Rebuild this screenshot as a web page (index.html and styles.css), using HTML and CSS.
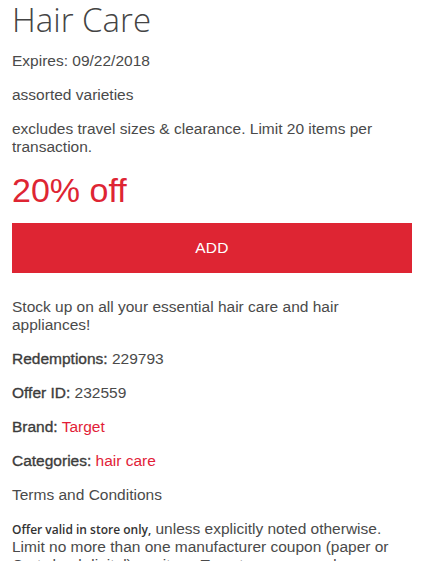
FILE: index.html
```html
<!DOCTYPE html>
<html>
<head>
<meta charset="utf-8">
<link rel="stylesheet" href="styles.css">
</head>
<body>
<div class="offer">
  <h1 class="title">Hair Care</h1>
  <p class="line">Expires: 09/22/2018</p>
  <p class="line">assorted varieties</p>
  <p class="line">excludes travel sizes &amp; clearance. Limit 20 items per transaction.</p>
  <div class="discount">20% off</div>
  <button class="add">ADD</button>
  <p class="line">Stock up on all your essential hair care and hair appliances!</p>
  <p class="line"><span class="label">Redemptions:</span> 229793</p>
  <p class="line"><span class="label">Offer ID:</span> 232559</p>
  <p class="line"><span class="label">Brand:</span> <a class="link">Target</a></p>
  <p class="line"><span class="label">Categories:</span> <a class="link">hair care</a></p>
  <p class="line">Terms and Conditions</p>
  <p class="line"><span class="fine">Offer valid in store only,</span> unless explicitly noted otherwise. Limit no more than one manufacturer coupon (paper or Cartwheel digital) per item. Target coupons and one Cartwheel offer may be combined.</p>
</div>
</body>
</html>
```

FILE: styles.css
```css
html, body {
  margin: 0;
  padding: 0;
  background: #fff;
}
body {
  font-family: "Liberation Sans", Arial, sans-serif;
  color: #4a4a4a;
}
.offer {
  padding: 0 11px 0 12px;
}
.title {
  margin: 0;
  padding-top: 1px;
  font-family: "Open Sans", "Liberation Sans", sans-serif;
  font-weight: 300;
  font-size: 33px;
  line-height: 38px;
  color: #444;
}
.line {
  margin: 16px 0 0;
  font-size: 15.5px;
  line-height: 18px;
}
.title + .line {
  margin-top: 13px;
}
.label {
  color: #3c3c3c;
  -webkit-text-stroke: 0.35px #3c3c3c;
}
.link {
  color: #e21d38;
  text-decoration: none;
}
.discount {
  margin-top: 14px;
  font-size: 34px;
  line-height: 40px;
  color: #de2533;
}
.add {
  display: block;
  width: 100%;
  height: 50px;
  margin-top: 13px;
  margin-bottom: 25px;
  border: none;
  background: #de2533;
  color: #fff;
  font-family: "Liberation Sans", Arial, sans-serif;
  font-size: 15.5px;
  letter-spacing: 0.3px;
}
.add + .line {
  margin-top: 0;
}
.fine {
  font-family: "Open Sans", sans-serif;
  font-weight: 600;
  font-size: 12px;
  line-height: 1;
  color: #333;
}
```
